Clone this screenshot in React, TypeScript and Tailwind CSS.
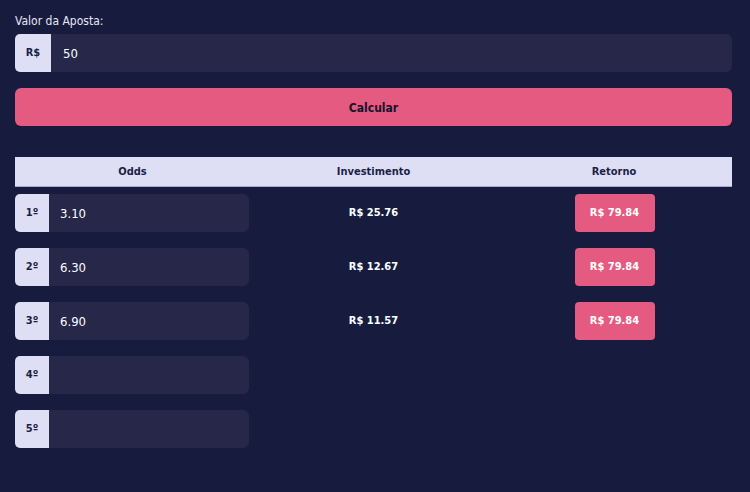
import { type ReactNode } from 'react';

const rows = [
  { label: '1º', odd: '3.10', invest: 'R$ 25.76', ret: 'R$ 79.84' },
  { label: '2º', odd: '6.30', invest: 'R$ 12.67', ret: 'R$ 79.84' },
  { label: '3º', odd: '6.90', invest: 'R$ 11.57', ret: 'R$ 79.84' },
  { label: '4º', odd: '', invest: '', ret: '' },
  { label: '5º', odd: '', invest: '', ret: '' },
];

export default function App(): ReactNode {
  return (
    <div className="min-h-[492px] w-full bg-[#171c3f] pl-[15px] pr-[18px] pt-[14px] font-['DejaVu_Sans_Condensed','DejaVu_Sans',sans-serif] text-white">
      {/* Valor da aposta */}
      <label htmlFor="valor" className="block text-[12px] leading-[14px] text-[#e6e6f5]">
        Valor da Aposta:
      </label>
      <div className="mt-[6px] flex h-[38px] w-full">
        <span className="flex w-[36px] items-center justify-center rounded-l-[5px] bg-[#dedff5] pt-[1px] text-[11px] font-bold text-[#1c1f45]">
          R$
        </span>
        <input
          id="valor"
          readOnly
          value="50"
          className="flex-1 rounded-r-[6px] bg-[#262749] px-[12px] pt-[1px] text-[13px] text-white outline-none"
        />
      </div>

      <button className="mt-[16px] h-[38px] w-full rounded-[6px] bg-[#e55a80] pt-[1px] text-[12px] font-bold text-[#13132b]">
        Calcular
      </button>

      {/* Tabela */}
      <div className="mt-[31px] grid h-[30px] grid-cols-3 items-center border-b border-[#a9aad2] bg-[#dedff5] pt-[1px] text-[11px] font-bold text-[#1c1f45]">
        <div className="pr-[4px] text-center">Odds</div>
        <div className="text-center">Investimento</div>
        <div className="pl-[3px] text-center">Retorno</div>
      </div>

      <div className="mt-[7px] flex flex-col gap-[16px]">
        {rows.map((row) => (
          <div key={row.label} className="grid h-[38px] grid-cols-3 items-center">
            <div className="flex h-[38px] pr-[5px]">
              <span className="flex w-[34px] items-center justify-center rounded-l-[5px] bg-[#dedff5] pt-[1px] text-[11px] font-bold text-[#1c1f45]">
                {row.label}
              </span>
              <input
                readOnly
                value={row.odd}
                className="min-w-0 flex-1 rounded-r-[6px] bg-[#262749] px-[11px] pt-[1px] text-[13px] text-white outline-none"
              />
            </div>
            <div className="pt-[1px] text-center text-[11px] font-bold">{row.invest}</div>
            <div className="flex justify-center pl-[4px]">
              {row.ret && (
                <span className="flex h-[38px] w-[80px] items-center justify-center rounded-[4px] bg-[#e55a80] pt-[1px] text-[11px] font-bold text-white">
                  {row.ret}
                </span>
              )}
            </div>
          </div>
        ))}
      </div>
    </div>
  );
}
